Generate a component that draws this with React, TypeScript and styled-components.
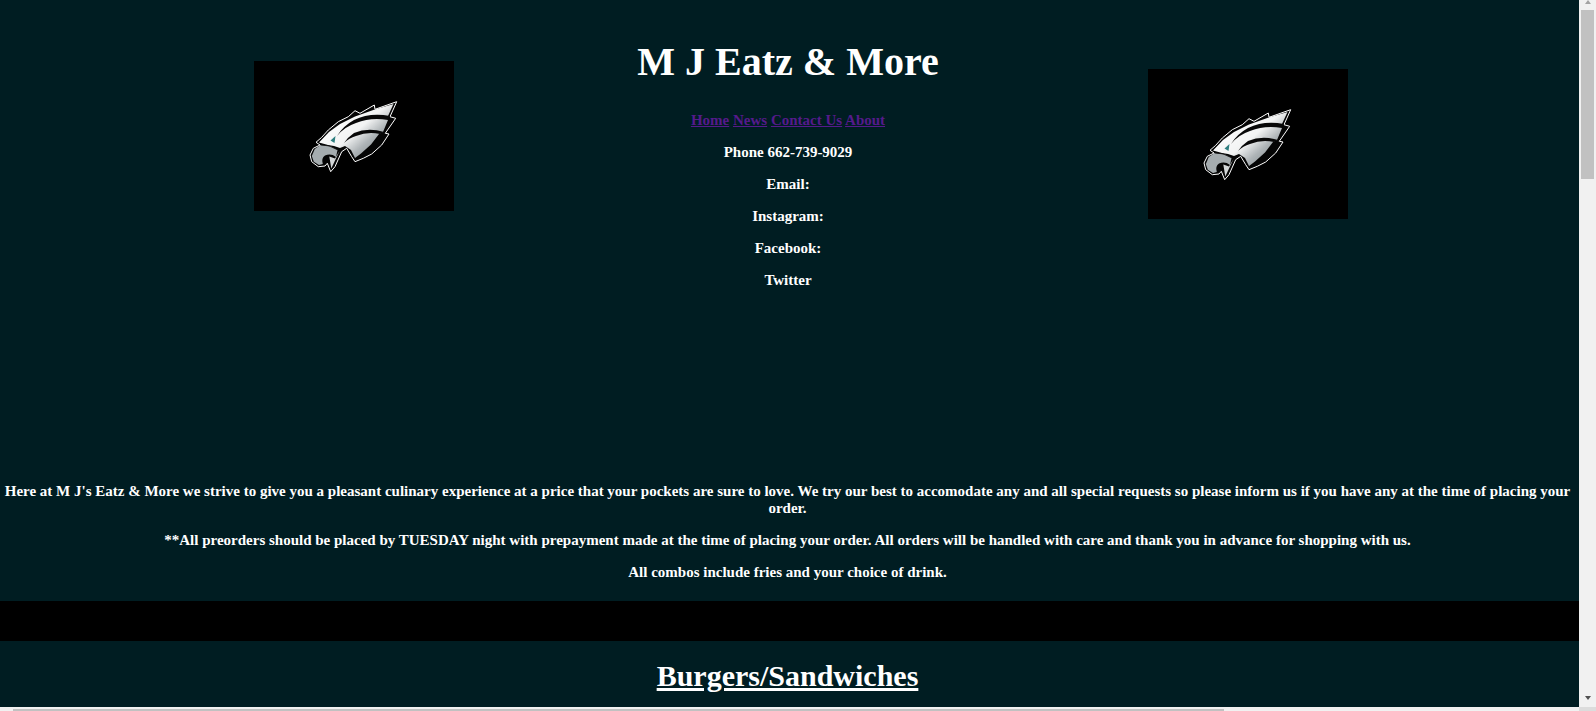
import React from 'react';
import styled, { createGlobalStyle } from 'styled-components';

const GlobalStyle = createGlobalStyle`
  html, body {
    margin: 0;
    height: 711px;
    overflow: hidden;
    background: #001d22;
  }
`;

const Window = styled.div`
  display: flex;
  flex-direction: column;
  width: 1596px;
  height: 711px;
  overflow: hidden;
`;

const Viewport = styled.div`
  display: flex;
  height: 707px;
`;

const Page = styled.main`
  width: 1579px;
  height: 707px;
  overflow: hidden;
  background: #001d22;
  color: #fff;
  font-family: "Liberation Serif", "Times New Roman", serif;
  font-size: 15px;
  font-weight: bold;
  text-align: center;
`;

const Header = styled.header`
  display: grid;
  grid-template-columns: 200px 668px 200px;
  padding-left: 254px;
  height: 468px;
`;

const LogoBox = styled.div<{ $top: number; $shift?: number }>`
  width: 200px;
  height: 150px;
  margin-top: ${({ $top }) => $top}px;
  margin-left: ${({ $shift }) => $shift ?? 0}px;
  background: #000;
  display: flex;
  align-items: center;
  justify-content: center;
`;

const EagleSvg = styled.svg`
  filter: blur(0.35px);
`;

const Title = styled.h1`
  margin: 38px 0 27px;
  font-size: 40px;
`;

const Line = styled.p`
  margin: 15px 0;
`;

const NavLink = styled.a`
  color: #551a8b;
  text-decoration: underline;
`;

const Intro = styled.section`
  padding: 0 4px 5px 0;
`;

const Band = styled.div`
  height: 40px;
  background: #000;
`;

const SectionTitle = styled.h2`
  margin: 18px 0 0;
  padding-right: 4px;
  font-size: 30px;
  text-decoration: underline;
`;

const VerticalBar = styled.aside`
  display: flex;
  flex-direction: column;
  align-items: center;
  width: 17px;
  height: 707px;
  background: #f1f1f1;
`;

const ArrowUp = styled.div`
  width: 0;
  height: 0;
  border-left: 3.5px solid transparent;
  border-right: 3.5px solid transparent;
  border-bottom: 4px solid #a3a3a3;
  margin-bottom: 6px;
`;

const ArrowDown = styled.div`
  width: 0;
  height: 0;
  border-left: 3.5px solid transparent;
  border-right: 3.5px solid transparent;
  border-top: 4px solid #505050;
  margin-top: auto;
  margin-bottom: 7px;
`;

const VerticalThumb = styled.div`
  width: 13px;
  height: 169px;
  background: #c1c1c1;
`;

const HorizontalBar = styled.div`
  display: flex;
  height: 4px;
  background: #f1f1f1;
`;

const HorizontalTrack = styled.div`
  width: 1579px;
  padding: 2px 0 0 13px;
  box-sizing: border-box;
`;

const HorizontalThumb = styled.div`
  width: 1211px;
  height: 2px;
  background: #c1c1c1;
`;

const Corner = styled.div`
  width: 17px;
  background: #dcdcdc;
`;

const EagleLogo: React.FC = () => (
  <EagleSvg width="100" height="80" viewBox="0 0 100 80" aria-hidden="true">
    <defs>
      <linearGradient id="wingShade" x1="0.2" y1="0.2" x2="0.85" y2="0.75">
        <stop offset="0" stopColor="#ffffff" />
        <stop offset="0.5" stopColor="#f2f3f3" />
        <stop offset="0.78" stopColor="#aeb4b7" />
        <stop offset="1" stopColor="#8f979a" />
      </linearGradient>
    </defs>
    <path
      d="M92.7 5.7 L71 13.3 L70.3 9 L56 17.3 L51 14.7 L44.3 20.7 L34.3 25.7 L24.3 34 L17.7 41.3 L12 46.3 L16 49 L9.3 52.3 L6 59 L7.7 65.7 L14.3 70.7 L21 70 L23.3 67.3 L26.7 75.7 L31 70.7 L37.7 55.7 L42.7 52.3 L47.7 60.7 L51 65.7 L59.3 62.3 L67.7 58 L77.7 49 L85 38 L81.3 37.3 L91.7 22.3 L86 20.7 Z"
      fill="#050505"
      stroke="#fff"
      strokeWidth="1"
    />
    <path d="M15 46.5 L25 36 L36 28 L51 20.5 L70 13.8 L89.5 8 L84 20 L84 24 L79 36 L75 38 L67 48.5 L57 57.5 L51 62 L47 54 L41 50 L36 52 L30 50 L24 49 Z" fill="url(#wingShade)" />
    <path d="M86 20 Q66 16 50 24 Q39 30 33 40 Q40 31 52 27 Q67 21 84 24 Z" fill="#080808" />
    <path d="M80 36 Q64 31 50 37 Q44 41 40 47 Q45 42 52 40 Q64 35 76 38 Z" fill="#080808" />
    <path d="M16.5 49 L10.8 53 L7.8 60 L9.8 65.7 L15 69 L18.8 68 Q17 62 21 59.5 Q27 57 32 61 L33.5 54 L27 50.5 Z" fill="#a5acaf" />
    <path d="M17 49 Q25 48.5 33 53.5" fill="none" stroke="#111" strokeWidth="0.8" />
    <path d="M25.3 60.5 L27.3 72.5 L35.5 55 L31 62.5 Z" fill="#d3d6d7" />
    <path d="M26.5 44.5 L31.5 40 L30.5 47 Z" fill="#2f7f80" />
  </EagleSvg>
);

const App: React.FC = () => (
  <Window>
    <GlobalStyle />
    <Viewport>
      <Page>
        <Header>
          <LogoBox $top={61}><EagleLogo /></LogoBox>
          <div>
            <Title>M J Eatz &amp; More</Title>
            <Line>
              <NavLink href="#">Home</NavLink> <NavLink href="#">News</NavLink>{' '}
              <NavLink href="#">Contact Us</NavLink> <NavLink href="#">About</NavLink>
            </Line>
            <Line>Phone 662-739-9029</Line>
            <Line>Email:</Line>
            <Line>Instagram:</Line>
            <Line>Facebook:</Line>
            <Line>Twitter</Line>
          </div>
          <LogoBox $top={69} $shift={26}><EagleLogo /></LogoBox>
        </Header>
        <Intro>
          <Line>
            Here at M J's Eatz &amp; More we strive to give you a pleasant culinary experience at a price that your pockets are sure to love. We try our best to accomodate any and all special requests so please inform us if you have any at the time of placing your order.
          </Line>
          <Line>
            **All preorders should be placed by TUESDAY night with prepayment made at the time of placing your order. All orders will be handled with care and thank you in advance for shopping with us.
          </Line>
          <Line>All combos include fries and your choice of drink.</Line>
        </Intro>
        <Band />
        <SectionTitle>Burgers/Sandwiches</SectionTitle>
      </Page>
      <VerticalBar>
        <ArrowUp />
        <VerticalThumb />
        <ArrowDown />
      </VerticalBar>
    </Viewport>
    <HorizontalBar>
      <HorizontalTrack><HorizontalThumb /></HorizontalTrack>
      <Corner />
    </HorizontalBar>
  </Window>
);

export default App;
